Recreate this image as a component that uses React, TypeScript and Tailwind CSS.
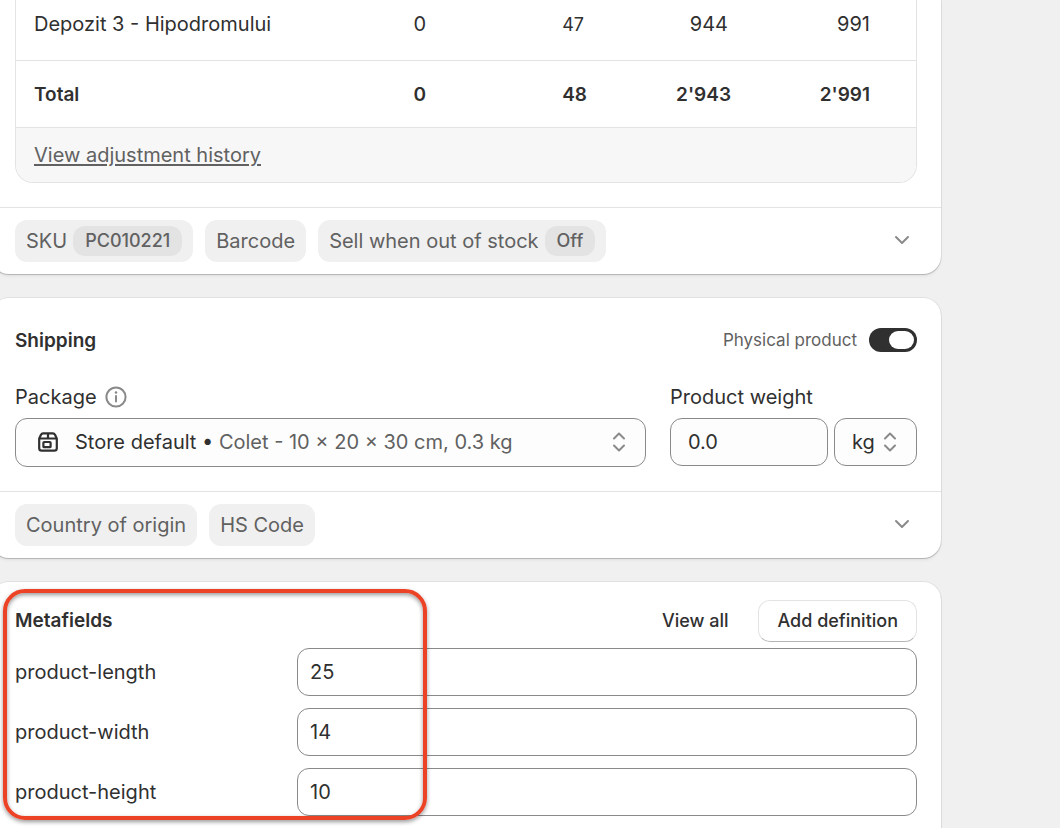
import { useState } from "react";
import type { ReactNode } from "react";

const card =
  "bg-white shadow-[0_0_0_1px_rgba(0,0,0,0.06),0_1px_1px_rgba(0,0,0,0.18),0_3px_3px_rgba(0,0,0,0.04)]";

function Chip({ label, badge }: { label: string; badge?: string }) {
  return (
    <span className="flex h-[42px] items-center gap-[6px] whitespace-nowrap rounded-xl bg-[#f0f0f0] px-[11px] text-[#616161]">
      {label}
      {badge && (
        <span className="flex h-[30px] items-center rounded-xl bg-[#e3e3e3] px-3 text-lg font-medium">
          {badge}
        </span>
      )}
    </span>
  );
}

function ChipBar({ label, children }: { label: string; children: ReactNode }) {
  return (
    <div className="flex items-center justify-between border-t border-[#e3e3e3] px-6 py-3">
      <div className="flex gap-3">{children}</div>
      <button type="button" aria-label={label} className="flex h-[42px] w-[30px] items-center justify-center pb-[3px]">
        <svg width="16" height="10" viewBox="0 0 16 10" fill="none" stroke="#8a8a8a" strokeWidth="2" strokeLinecap="round" strokeLinejoin="round">
          <path d="M2 2l6 6 6-6" />
        </svg>
      </button>
    </div>
  );
}

function SelectArrows({ className = "" }: { className?: string }) {
  return (
    <svg className={className} width="14" height="20" viewBox="0 0 14 20" fill="none" stroke="#8a8a8a" strokeWidth="2" strokeLinecap="round" strokeLinejoin="round" aria-hidden="true">
      <path d="M2 6.5l5-5 5 5M2 13.5l5 5 5-5" />
    </svg>
  );
}

function InfoIcon() {
  return (
    <svg width="22" height="22" viewBox="0 0 22 22" fill="none" aria-hidden="true">
      <circle cx="11" cy="11" r="9.6" stroke="#8a8a8a" strokeWidth="2" />
      <path d="M11 10v5.5" stroke="#8a8a8a" strokeWidth="2" strokeLinecap="round" />
      <circle cx="11" cy="6.5" r="1.3" fill="#8a8a8a" />
    </svg>
  );
}

function PackageIcon() {
  return (
    <svg width="20" height="20" viewBox="0 0 20 20" fill="none" stroke="#303030" strokeWidth="2.2" strokeLinejoin="round" aria-hidden="true">
      <path d="M1.2 6.4V16.2a2.5 2.5 0 0 0 2.5 2.5h12.6a2.5 2.5 0 0 0 2.5-2.5V6.4L16.9 2.6a2.2 2.2 0 0 0-2-1.3H5.1a2.2 2.2 0 0 0-2 1.3z" />
      <path d="M1.2 6.5h17.6M10 1.3v5.2" />
      <rect x="5.4" y="10" width="7.2" height="5.2" rx="0.8" />
    </svg>
  );
}

const metafields = [
  { name: "product-length", value: "25" },
  { name: "product-width", value: "14" },
  { name: "product-height", value: "10" },
];

export default function App() {
  const [physical, setPhysical] = useState(true);

  return (
    <div className="min-h-screen overflow-hidden bg-[#f0f0f0] font-['Inter',sans-serif] text-xl leading-[26px] text-[#303030]">
      <main className="-ml-[9px] mr-[119px] flex min-h-screen flex-col gap-6">
        <section className={`${card} rounded-b-[18px]`}>
          <div className="px-6 pb-6">
            <div className="overflow-hidden rounded-b-[18px] border-x border-b border-[#e3e3e3]">
              <table className="w-full table-fixed border-collapse text-right">
                <colgroup>
                  <col />
                  <col className="w-[120px]" />
                  <col className="w-[161px]" />
                  <col className="w-[144px]" />
                  <col className="w-[185px]" />
                </colgroup>
                <tbody>
                  <tr className="border-b border-[#e3e3e3]">
                    <th scope="row" className="pb-[23px] pl-[18px] pt-[11px] text-left font-normal">Depozit 3 - Hipodromului</th>
                    <td className="pb-[23px] pt-[11px]">0</td>
                    <td className="pb-[23px] pt-[11px]">
                      <button type="button" className="pr-[3px] text-lg leading-6">47</button>
                    </td>
                    <td className="pb-[23px] pt-[11px]">
                      <button type="button" className="pr-[3px]">944</button>
                    </td>
                    <td className="pb-[23px] pr-[46px] pt-[11px]">991</td>
                  </tr>
                  <tr className="border-b border-[#e3e3e3] text-[19px] font-semibold">
                    <th scope="row" className="pb-[19px] pl-[18px] pt-[21px] text-left font-semibold">Total</th>
                    <td className="pb-[19px] pt-[21px]">0</td>
                    <td className="pb-[19px] pt-[21px]">48</td>
                    <td className="pb-[19px] pt-[21px]">2'943</td>
                    <td className="pb-[19px] pr-[46px] pt-[21px]">2'991</td>
                  </tr>
                </tbody>
              </table>
              <div className="bg-[#f7f7f7] px-[18px] py-[14px]">
                <a href="#history" className="text-[#616161] underline underline-offset-2">View adjustment history</a>
              </div>
            </div>
          </div>
          <ChipBar label="Show inventory details">
            <Chip label="SKU" badge="PC010221" />
            <Chip label="Barcode" />
            <Chip label="Sell when out of stock" badge="Off" />
          </ChipBar>
        </section>

        <section className={`${card} rounded-[18px]`}>
          <div className="px-6 pb-6 pt-[30px]">
            <div className="flex items-start justify-between">
              <h2 className="text-[19px] font-semibold leading-[26px]">Shipping</h2>
              <label className="flex items-center gap-3 text-[17px] leading-6 text-[#616161]">
                Physical product
                <input
                  type="checkbox"
                  role="switch"
                  checked={physical}
                  onChange={(e) => setPhysical(e.target.checked)}
                  className="flex h-6 w-12 cursor-pointer appearance-none items-center rounded-full bg-[#8a8a8a] px-[3px] before:h-[18px] before:w-[25px] before:rounded-full before:bg-white checked:justify-end checked:bg-[#303030]"
                />
              </label>
            </div>
            <div className="mt-[30px] flex gap-6">
              <div className="min-w-0 flex-1">
                <div className="flex items-center gap-2">
                  <span id="package-label">Package</span>
                  <InfoIcon />
                </div>
                <button
                  type="button"
                  aria-labelledby="package-label package-value"
                  className="mt-2 flex h-[49px] w-full items-center rounded-xl border border-[#8a8a8a] bg-[#fdfdfd] pb-px pl-[22px] pr-[19px] text-left"
                >
                  <PackageIcon />
                  <span id="package-value" className="ml-[17px] flex-1 whitespace-nowrap">
                    Store default • <span className="text-[#616161]">Colet - 10 × 20 × 30 cm, 0.3 kg</span>
                  </span>
                  <SelectArrows />
                </button>
              </div>
              <div className="w-[247px]">
                <label htmlFor="weight" className="block">Product weight</label>
                <div className="mt-2 flex gap-[6px]">
                  <input
                    id="weight"
                    defaultValue="0.0"
                    inputMode="decimal"
                    className="h-12 min-w-0 flex-1 rounded-xl border border-[#8a8a8a] bg-[#fdfdfd] px-[17px]"
                  />
                  <div className="relative">
                    <select
                      aria-label="Weight unit"
                      defaultValue="kg"
                      className="h-12 w-[83px] appearance-none rounded-xl border border-[#8a8a8a] bg-[#fdfdfd] pl-[17px]"
                    >
                      <option>kg</option>
                      <option>g</option>
                      <option>lb</option>
                      <option>oz</option>
                    </select>
                    <SelectArrows className="pointer-events-none absolute right-5 top-[14px]" />
                  </div>
                </div>
              </div>
            </div>
          </div>
          <ChipBar label="Show customs details">
            <Chip label="Country of origin" />
            <Chip label="HS Code" />
          </ChipBar>
        </section>

        <section className={`${card} relative flex-1 rounded-t-[18px] px-6 pb-3 pt-[18px]`}>
          <div className="flex items-baseline justify-between">
            <h2 className="text-[19px] font-semibold leading-[26px]">Metafields</h2>
            <div className="flex items-center gap-3 text-lg font-medium">
              <button type="button" className="h-[42px] px-[18px]">View all</button>
              <button
                type="button"
                className="h-[42px] rounded-xl border border-[#e3e3e3] border-b-[#b5b5b5] bg-white px-[18px]"
              >
                Add definition
              </button>
            </div>
          </div>
          <div className="mt-[6px] flex flex-col gap-3">
            {metafields.map((field) => (
              <div key={field.name} className="flex items-center">
                <label htmlFor={field.name} className="w-[282px]">{field.name}</label>
                <input
                  id={field.name}
                  defaultValue={field.value}
                  className="h-12 min-w-0 flex-1 rounded-xl border border-[#8a8a8a] bg-white px-3"
                />
              </div>
            ))}
          </div>
          <div className="pointer-events-none absolute left-3 top-[7px] h-[231px] w-[424px] rounded-[22px] border-4 border-[#ec4226] shadow-[0_2px_4px_rgba(0,0,0,0.4),inset_0_2px_4px_rgba(0,0,0,0.4)]" />
        </section>
      </main>
    </div>
  );
}
